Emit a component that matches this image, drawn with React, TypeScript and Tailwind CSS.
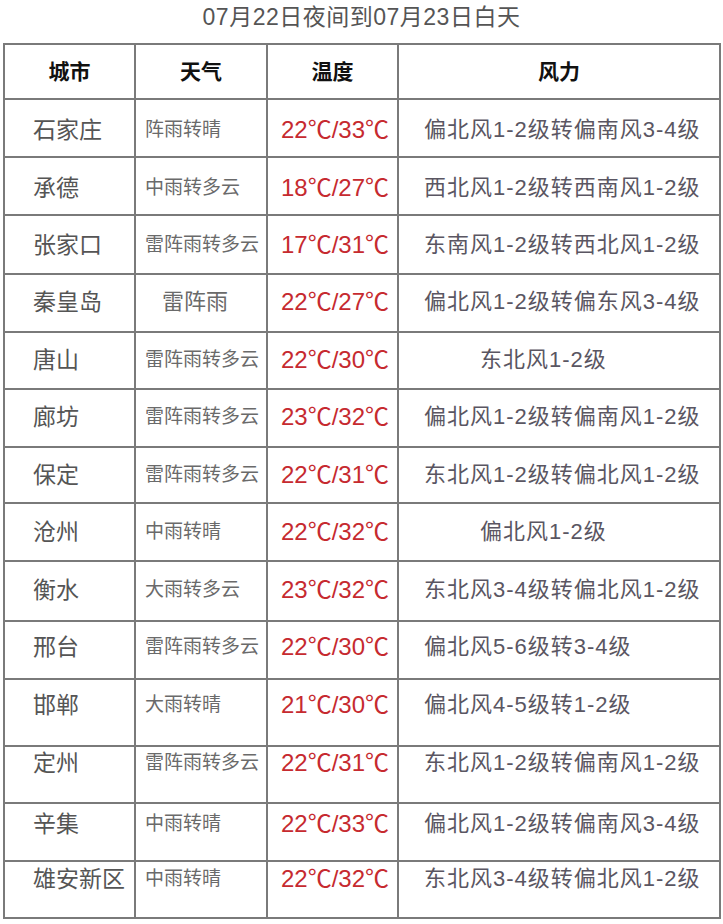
import React from "react";

interface IRow {
  city: string;
  weather: string;
  temp: string;
  wind: string;
  h: number; // row height incl. bottom border
  c: number; // text centre from top of row
  bigWeather?: boolean;
  shortWind?: boolean;
}

const ROWS: IRow[] = [
  { city: "石家庄", weather: "阵雨转晴", temp: "22℃/33℃", wind: "偏北风1-2级转偏南风3-4级", h: 58, c: 31 },
  { city: "承德", weather: "中雨转多云", temp: "18℃/27℃", wind: "西北风1-2级转西南风1-2级", h: 58, c: 31 },
  { city: "张家口", weather: "雷阵雨转多云", temp: "17℃/31℃", wind: "东南风1-2级转西北风1-2级", h: 59, c: 30 },
  { city: "秦皇岛", weather: "雷阵雨", temp: "22℃/27℃", wind: "偏北风1-2级转偏东风3-4级", h: 58, c: 28, bigWeather: true },
  { city: "唐山", weather: "雷阵雨转多云", temp: "22℃/30℃", wind: "东北风1-2级", h: 57, c: 28, shortWind: true },
  { city: "廊坊", weather: "雷阵雨转多云", temp: "23℃/32℃", wind: "偏北风1-2级转偏南风1-2级", h: 58, c: 28 },
  { city: "保定", weather: "雷阵雨转多云", temp: "22℃/31℃", wind: "东北风1-2级转偏北风1-2级", h: 56, c: 28 },
  { city: "沧州", weather: "中雨转晴", temp: "22℃/32℃", wind: "偏北风1-2级", h: 58, c: 29, shortWind: true },
  { city: "衡水", weather: "大雨转多云", temp: "23℃/32℃", wind: "东北风3-4级转偏北风1-2级", h: 60, c: 29 },
  { city: "邢台", weather: "雷阵雨转多云", temp: "22℃/30℃", wind: "偏北风5-6级转3-4级", h: 58, c: 26 },
  { city: "邯郸", weather: "大雨转晴", temp: "21℃/30℃", wind: "偏北风4-5级转1-2级", h: 67, c: 26 },
  { city: "定州", weather: "雷阵雨转多云", temp: "22℃/31℃", wind: "东北风1-2级转偏南风1-2级", h: 57, c: 17 },
  { city: "辛集", weather: "中雨转晴", temp: "22℃/33℃", wind: "偏北风1-2级转偏南风3-4级", h: 58, c: 21 },
  { city: "雄安新区", weather: "中雨转晴", temp: "22℃/32℃", wind: "东北风3-4级转偏北风1-2级", h: 57, c: 18 },
];

const FONT = { fontFamily: '"Liberation Sans", "Noto Sans CJK SC", sans-serif' };

const HeaderRow = () => {
  const cell = "h-full flex justify-center pt-[14px] border-r-2 border-[#7a7a7a]";
  return (
    <div className="flex h-[55px] border-b-2 border-[#7a7a7a] text-[21px] leading-[26px] font-bold text-[#111]">
      <div className={`${cell} w-[131px]`}>城市</div>
      <div className={`${cell} w-[132px]`}>天气</div>
      <div className={`${cell} w-[131px]`}>温度</div>
      <div className={`${cell} w-[322px]`}>风力</div>
    </div>
  );
};

const DataRow = ({ row }: { row: IRow }) => {
  const pt = row.c - 14;
  const cell = "h-full border-r-2 border-[#7a7a7a] whitespace-nowrap";
  return (
    <div className="flex border-b-2 border-[#7a7a7a] leading-[26px]" style={{ height: row.h }}>
      <div className={`${cell} w-[131px] pl-[28px] text-[23px] text-[#555]`} style={{ paddingTop: pt }}>
        {row.city}
      </div>
      <div
        className={`${cell} w-[132px] text-[#6a6a6a] ${row.bigWeather ? "pl-[26px] text-[22px]" : "pl-[9px] text-[19px]"}`}
        style={{ paddingTop: pt }}
      >
        {row.weather}
      </div>
      <div className={`${cell} w-[131px] pl-[13px] text-[24px] text-[#c62a2f]`} style={{ paddingTop: pt }}>
        {row.temp}
      </div>
      <div
        className={`${cell} w-[322px] text-[22px] tracking-[1px] text-[#5a5662] ${row.shortWind ? "pl-[81px]" : "pl-[25px]"}`}
        style={{ paddingTop: pt }}
      >
        {row.wind}
      </div>
    </div>
  );
};

const App = () => {
  return (
    <div className="w-[723px] h-[924px] bg-white" style={FONT}>
      <div className="h-[43px] pt-[3px] text-center text-[23px] tracking-[0.5px] leading-[28px] text-[#555]">
        07月22日夜间到07月23日白天
      </div>
      <div className="ml-[3px] w-[718px] border-l-2 border-t-2 border-[#7a7a7a]">
        <HeaderRow />
        {ROWS.map((row) => (
          <DataRow key={row.city} row={row} />
        ))}
      </div>
    </div>
  );
};

export default App;
